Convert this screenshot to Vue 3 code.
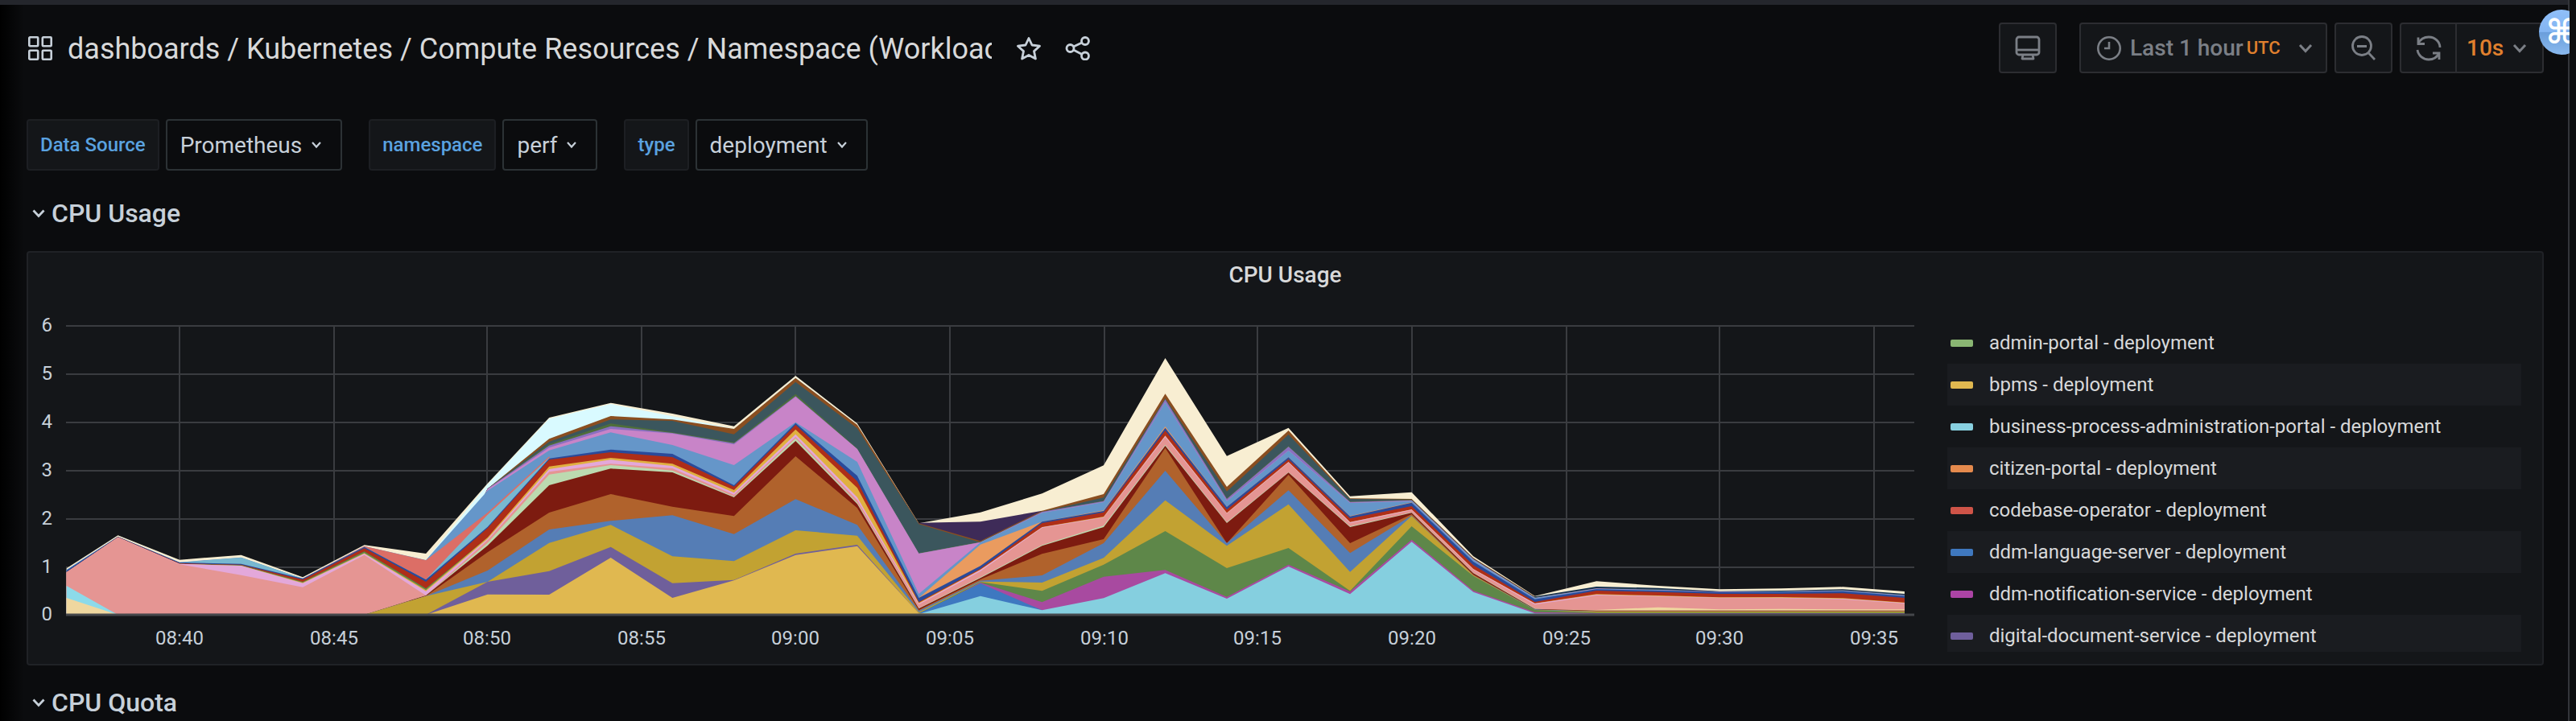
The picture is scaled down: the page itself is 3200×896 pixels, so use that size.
<script setup>
const z = (n) => Array(n).fill(0)
const layers = [
  ['#F8EED2', [173,296,205,223,140,260,228,490,735,790,750,703,891,713,341,382,452,557,957,592,697,442,457,218,70,125,108,95,98,104,87]],
  ['#D9FAFF', [...z(6),205,486,731,786,740,693,885,709,...z(17)]],
  ['#3E2B58', [...z(14),343,347,388,...z(14)]],
  ['#8A4E20', [...z(7),470,656,741,728,693,883,708,341,275,388,450,824,477,687,434,432,212,68,...z(6)]],
  ['#0E2A4A', [...z(24),68,105,100,88,90,95,78]],
  ['#3B565D', [...z(7),470,645,728,723,673,868,695,338,270,384,437,807,460,672,432,430,210,66,100,96,86,88,92,75]],
  ['#4E6E3A', [...z(7),470,636,713,680,643,823,620,230,272,384,425,805,434,629,422,428,208,65,...z(6)]],
  ['#8A70C0', [...z(7),470,631,703,678,640,815,618,229,271,384,424,803,432,627,421,427,207,64,...z(6)]],
  ['#C884C8', [...z(7),468,623,693,676,635,813,618,228,270,381,421,793,425,613,418,425,206,63,98,93,86,87,91,73]],
  ['#6596C9', [168,292,196,214,135,256,204,463,613,680,633,558,718,570,78,270,380,420,792,424,612,417,424,205,62,97,92,85,87,90,72]],
  ['#DC6E66', [0,0,0,0,135,256,203,381,590,...z(22)]],
  ['#78B8D0', [0,0,195,213,135,253,131,373,585,...z(22)]],
  ['#EA9B5F', [...z(14),63,262,347,389,702,402,587,368,419,...z(8)]],
  ['#2A4A9A', [165,291,195,190,135,253,131,328,583,616,600,483,715,518,63,182,347,387,697,402,587,367,418,198,58,95,90,85,85,88,70]],
  ['#AE2E18', [159,290,192,187,131,248,123,323,578,606,588,478,708,498,48,172,342,382,687,392,580,359,405,185,48,90,85,78,78,80,63]],
  ['#5E8749', [0,0,190,185,123,236,98,288,...z(23)]],
  ['#E0B040', [158,289,190,183,120,230,92,288,553,585,563,465,691,473,45,169,327,366,668,380,570,346,393,171,43,77,72,65,66,62,46]],
  ['#E3A8DA', [158,289,190,183,118,228,88,283,543,578,555,455,673,438,42,167,326,364,667,379,569,345,392,170,42,75,70,64,64,60,44]],
  ['#E59593', [158,288,188,148,103,223,72,278,533,563,546,448,663,428,38,162,324,362,662,377,567,342,390,168,38,72,68,62,62,58,42]],
  ['#8CDAEA', [108,...z(30)]],
  ['#BCDAB0', [...z(6),72,268,523,558,538,441,658,418,25,140,260,332,634,345,532,330,382,157,24,...z(6)]],
  ['#EFD79F', [63,...z(23),20,18,28,20,22,20,20]],
  ['#7D1B10', [...z(6),72,258,483,545,531,438,648,413,23,137,257,327,630,342,530,327,380,155,22,16,16,16,16,16,16]],
  ['#B0622C', [...z(6),70,233,381,450,403,368,591,398,18,132,227,282,622,267,522,267,375,150,20,14,14,14,14,14,14]],
  ['#557DB5', [...z(6),70,165,318,350,371,301,431,335,15,127,147,267,537,267,464,230,370,147,20,13,13,13,13,13,13]],
  ['#C2A232', [...z(6),70,123,268,335,218,200,315,295,10,124,120,212,427,257,412,160,368,147,18,12,12,12,12,12,12]],
  ['#5E8749', [...z(14),5,122,89,187,312,174,249,89,330,145,18,8,8,8,8,8,8]],
  ['#A84AA0', [...z(15),120,47,142,167,67,187,87,280,90,10,6,6,6,6,6,6]],
  ['#3E78C0', [...z(14),5,117,17,...z(8),4,4,4,4,4,4]],
  ['#85CFDF', [...z(14),3,70,17,62,155,60,180,77,272,85,5,3,3,3,3,3,3]],
  ['#6F5F9B', [...z(7),123,163,253,118,130,228,261,5,...z(16)]],
  ['#E0B850', [...z(7),76,75,213,63,128,223,256,5,3,3,3,3,3,3,3,3,3,...z(8)]],
  ['#5A3B5E', [3,3,4,4,3,3,...z(25)]],
]
const colX = (i) => (i === 0 ? 82.6 : 146.5 + (i - 1) * 76.53)
const BASE = 764
const areas = layers.map(([fill, h]) => {
  const top = h.map((v, i) => `${colX(i).toFixed(1)},${(BASE - v / 3).toFixed(1)}`)
  return { fill, points: `82.6,${BASE} ${top.join(' ')} ${colX(30).toFixed(1)},${BASE}` }
})
const yTicks = [6, 5, 4, 3, 2, 1].map((v, i) => ({ v, y: 405 + i * 60 })).concat([{ v: 0, y: 764 }])
const xTicks = [
  ['08:40', 223], ['08:45', 415], ['08:50', 605], ['08:55', 797], ['09:00', 988], ['09:05', 1180],
  ['09:10', 1372], ['09:15', 1562], ['09:20', 1754], ['09:25', 1946], ['09:30', 2136], ['09:35', 2328],
]
const legend = [
  ['admin-portal - deployment', '#8AB673'],
  ['bpms - deployment', '#E0B850'],
  ['business-process-administration-portal - deployment', '#88D0E0'],
  ['citizen-portal - deployment', '#E58A4D'],
  ['codebase-operator - deployment', '#CF5448'],
  ['ddm-language-server - deployment', '#3F78BF'],
  ['ddm-notification-service - deployment', '#AC44A5'],
  ['digital-document-service - deployment', '#6F5F9C'],
]
const vars = [
  ['Data Source', 'Prometheus'],
  ['namespace', 'perf'],
  ['type', 'deployment'],
]
</script>

<template>
  <div class="root">
    <div class="topbar"></div>

    <header class="nav">
      <div class="crumb">
        <svg class="ico-apps" width="30" height="30" viewBox="0 0 30 30" fill="none" stroke="#c7d0d9" stroke-width="2.6">
          <rect x="1.3" y="1.3" width="10.9" height="10.9" rx="1" />
          <rect x="17.8" y="1.3" width="10.9" height="10.9" rx="1" />
          <rect x="1.3" y="17.8" width="10.9" height="10.9" rx="1" />
          <rect x="17.8" y="17.8" width="10.9" height="10.9" rx="1" />
        </svg>
        <div class="title">dashboards / Kubernetes / Compute Resources / Namespace (Workloads)</div>
        <svg class="ico-star" width="32" height="30" viewBox="0 0 32 30" fill="none" stroke="#c7d0d9" stroke-width="2.8" stroke-linejoin="round">
          <path d="M16 2.5 L20 11 L29.5 12.2 L22.5 18.6 L24.4 28 L16 23.4 L7.6 28 L9.5 18.6 L2.5 12.2 L12 11 Z" />
        </svg>
        <svg class="ico-share" width="32" height="30" viewBox="0 0 32 30" fill="none" stroke="#c7d0d9" stroke-width="2.8">
          <circle cx="25" cy="6" r="4.5" />
          <circle cx="6.5" cy="15" r="4.5" />
          <circle cx="25" cy="24.5" r="4.5" />
          <path d="M10.5 13 L21 8 M10.5 17 L21 22.5" />
        </svg>
      </div>

      <div class="actions">
        <button class="btn btn-square">
          <svg width="32" height="32" viewBox="0 0 32 32" fill="none" stroke="#7b7f86" stroke-width="2.8" stroke-linejoin="round">
            <rect x="2" y="2" width="28" height="22" rx="3" />
            <path d="M2 18 H30" />
            <path d="M10 24 L9 29 H23 L22 24" />
          </svg>
        </button>
        <button class="btn btn-time">
          <svg width="32" height="32" viewBox="0 0 32 32" fill="none" stroke="#7b7f86" stroke-width="2.6">
            <circle cx="16" cy="16" r="13.7" />
            <path d="M16 8 V16 H10" />
          </svg>
          <span class="time-text">Last 1 hour</span>
          <span class="utc">UTC</span>
          <svg class="time-chev" width="18" height="12" viewBox="0 0 18 12" fill="none" stroke="#7b7f86" stroke-width="3">
            <path d="M2 2 L9 9.5 L16 2" />
          </svg>
        </button>
        <button class="btn btn-square">
          <svg width="32" height="32" viewBox="0 0 32 32" fill="none" stroke="#7b7f86" stroke-width="2.8">
            <circle cx="14" cy="13" r="11.5" />
            <path d="M8 13.5 H20" stroke-width="3" />
            <path d="M22.5 22 L30 30" />
          </svg>
        </button>
        <div class="btn-group">
          <button class="seg seg-refresh">
            <svg width="32" height="32" viewBox="0 0 32 32" fill="none" stroke="#7b7f86" stroke-width="2.8">
              <path d="M3 10 C6 4 11 2 16 2 C24 2 30 8 30 15" />
              <path d="M3 2.5 V10.5 H11" />
              <path d="M2 18 C3 25 9 30 16 30 C21 30 26 28 29 22" />
              <path d="M29 30 V22 H21" />
            </svg>
          </button>
          <button class="seg seg-interval">
            <span class="interval">10s</span>
            <svg width="18" height="12" viewBox="0 0 18 12" fill="none" stroke="#7b7f86" stroke-width="3">
              <path d="M2 2 L9 9.5 L16 2" />
            </svg>
          </button>
        </div>
      </div>
    </header>

    <div class="vars">
      <div v-for="[label, value] in vars" :key="label" class="var">
        <span class="var-label">{{ label }}</span>
        <span class="var-value">
          {{ value }}
          <svg width="14" height="10" viewBox="0 0 14 10" fill="none" stroke="#c7d0d9" stroke-width="2.2">
            <path d="M2 2 L7 7.5 L12 2" />
          </svg>
        </span>
      </div>
    </div>

    <div class="row-head">
      <svg width="16" height="11" viewBox="0 0 16 11" fill="none" stroke="#c7d0d9" stroke-width="2.8">
        <path d="M1.5 1.5 L8 8.5 L14.5 1.5" />
      </svg>
      <span>CPU Usage</span>
    </div>

    <section class="panel">
      <div class="panel-title">CPU Usage</div>
      <div class="panel-body">
        <svg class="chart" width="2384" height="425" viewBox="35 385 2384 425">
          <g stroke="#3a3c40" stroke-width="2">
            <line v-for="t in yTicks" :key="t.v" x1="82" x2="2378" :y1="t.y" :y2="t.y" />
            <line v-for="t in xTicks" :key="t[0]" :x1="t[1]" :x2="t[1]" y1="404" y2="764" />
          </g>
          <polygon v-for="(a, i) in areas" :key="i" :points="a.points" :fill="a.fill" />
          <line x1="82" x2="2378" y1="764" y2="764" stroke="#45474b" stroke-width="3" />
          <text v-for="t in yTicks" :key="'y' + t.v" class="tick" x="65" :y="t.y + 7" text-anchor="end">{{ t.v }}</text>
          <text v-for="t in xTicks" :key="'x' + t[0]" class="tick" :x="t[1]" y="801" text-anchor="middle">{{ t[0] }}</text>
        </svg>
        <ul class="legend">
          <li v-for="([name, color], i) in legend" :key="name" class="legend-row" :class="{ striped: i % 2 === 1 }">
            <i class="swatch" :style="{ background: color }"></i>
            <span>{{ name }}</span>
          </li>
        </ul>
      </div>
    </section>

    <div class="row-head row-head-2">
      <svg width="16" height="11" viewBox="0 0 16 11" fill="none" stroke="#c7d0d9" stroke-width="2.8">
        <path d="M1.5 1.5 L8 8.5 L14.5 1.5" />
      </svg>
      <span>CPU Quota</span>
    </div>

    <div class="shade"></div>
    <div class="edge"></div>
    <div class="cmd"><span>⌘</span></div>
  </div>
</template>

<style>
html, body {
  margin: 0;
  background: #0b0c0e;
}
</style>

<style scoped>
* {
  box-sizing: border-box;
}
.root {
  position: relative;
  width: 3200px;
  height: 896px;
  overflow: hidden;
  background: #0b0c0e;
  font-family: Roboto, "Liberation Sans", sans-serif;
  color: #c7d0d9;
}
.topbar {
  height: 6px;
  background: #24262c;
}
.nav {
  display: flex;
  align-items: center;
  justify-content: space-between;
  height: 63px;
  margin-top: 22px;
  padding: 0 40px 0 35px;
}
.crumb {
  display: flex;
  align-items: center;
}
.ico-apps {
  flex: none;
}
.title {
  width: 1148px;
  margin: 2px 0 0 19px;
  overflow: hidden;
  white-space: nowrap;
  font-size: 36px;
  line-height: 46px;
  color: #d8d9da;
}
.ico-star {
  margin-left: 30px;
}
.ico-share {
  margin-left: 29px;
}
.actions {
  display: flex;
  align-items: center;
}
.btn,
.btn-group {
  height: 63px;
  display: flex;
  align-items: center;
  background: #141619;
  border: 2px solid #2c2d31;
  border-radius: 4px;
  padding: 0;
  font-family: inherit;
}
.btn-square {
  width: 72px;
  justify-content: center;
}
.btn-time {
  width: 308px;
  margin: 0 9px 0 28px;
  padding-left: 19px;
}
.btn-square:nth-child(3) {
  margin-right: 9px;
}
.time-text {
  margin-left: 10px;
  font-size: 28px;
  font-weight: 500;
  color: #7b7f86;
}
.utc {
  margin-left: 4px;
  font-size: 22px;
  font-weight: 500;
  color: #e0802e;
}
.time-chev {
  margin-left: 22px;
}
.btn-group {
  width: 179px;
}
.seg {
  height: 100%;
  display: flex;
  align-items: center;
  background: none;
  border: 0;
  padding: 0;
  font-family: inherit;
}
.seg-refresh {
  width: 69px;
  justify-content: center;
  border-right: 2px solid #2c2d31;
}
.seg-interval {
  padding-left: 12px;
}
.interval {
  margin-right: 11px;
  font-size: 28px;
  font-weight: 500;
  color: #e0802e;
}
.vars {
  display: flex;
  gap: 33px;
  margin: 57px 0 0 33px;
}
.var {
  display: flex;
  gap: 8px;
}
.var-label {
  display: flex;
  align-items: center;
  height: 64px;
  padding: 0 15px;
  background: #141619;
  border: 2px solid #1d1f23;
  border-radius: 4px;
  font-size: 24px;
  font-weight: 500;
  color: #5aa2e0;
}
.var-value {
  display: flex;
  align-items: center;
  gap: 11px;
  height: 64px;
  padding: 0 23px 0 16px;
  background: #0b0c0e;
  border: 2px solid #2c3235;
  border-radius: 4px;
  font-size: 28px;
  color: #c7d0d9;
}
.row-head {
  display: flex;
  align-items: center;
  gap: 8px;
  height: 40px;
  margin: 33px 0 27px 40px;
  font-size: 32px;
  font-weight: 500;
  color: #c7d0d9;
}
.row-head-2 {
  margin: 26px 0 0 40px;
}
.panel {
  width: 3127px;
  height: 515px;
  margin-left: 33px;
  background: #141619;
  border: 2px solid #202226;
  border-radius: 4px;
  overflow: hidden;
}
.panel-title {
  height: 71px;
  padding-top: 10px;
  text-align: center;
  font-size: 28px;
  line-height: 36px;
  font-weight: 500;
  color: #d8d9da;
}
.panel-body {
  display: flex;
  align-items: flex-start;
}
.chart {
  flex: none;
  display: block;
}
.tick {
  font-family: Roboto, "Liberation Sans", sans-serif;
  font-size: 24px;
  fill: #c7d0d9;
}
.legend {
  width: 713px;
  height: 410px;
  margin: 15px 0 0;
  padding: 0;
  list-style: none;
  overflow: hidden;
}
.legend-row {
  display: flex;
  align-items: center;
  height: 52px;
  padding-left: 4px;
  font-size: 24px;
  color: #d8d9da;
}
.striped {
  background: #1a1c20;
}
.swatch {
  flex: none;
  width: 28px;
  height: 9px;
  margin-right: 20px;
  border-radius: 2px;
}
.shade {
  position: absolute;
  left: 0;
  top: 6px;
  bottom: 0;
  width: 30px;
  background: linear-gradient(90deg, #000 0%, rgba(0, 0, 0, 0) 100%);
  pointer-events: none;
}
.edge {
  position: absolute;
  left: 3190px;
  top: 0;
  bottom: 0;
  width: 10px;
  background: #0e0f11;
  border-left: 2px solid #33353a;
}
.cmd {
  position: absolute;
  left: 3154px;
  top: 12px;
  width: 38px;
  height: 56px;
  overflow: hidden;
}
.cmd::before {
  content: "";
  position: absolute;
  left: 0;
  top: 0;
  width: 56px;
  height: 56px;
  border-radius: 50%;
  background: linear-gradient(180deg, #90bff9 0%, #83b5f2 49%, #6a9edb 50%, #8ab9ee 100%);
}
.cmd span {
  position: absolute;
  left: 4px;
  top: 0;
  width: 48px;
  height: 56px;
  font-family: "DejaVu Sans", sans-serif;
  font-size: 42px;
  font-weight: 700;
  line-height: 56px;
  text-align: center;
  color: #fff;
}
</style>
